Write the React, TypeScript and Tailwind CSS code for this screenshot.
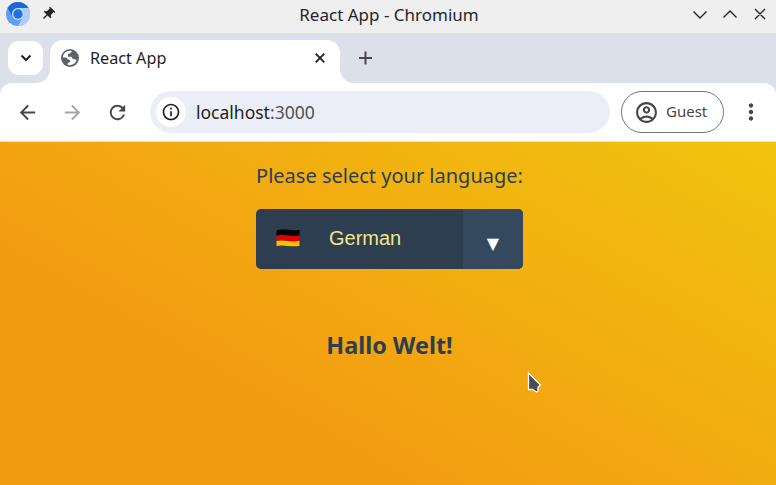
import React from "react";
import { MdArrowBack, MdArrowForward, MdRefresh, MdOutlineInfo, MdOutlineAccountCircle, MdMoreVert, MdPushPin } from "react-icons/md";

function ChromiumLogo() {
  return (
    <svg width="24" height="24" viewBox="0 0 24 24">
      <circle cx="12" cy="12" r="12" fill="#639df5" />
      <path d="M12 6h10.400A12 12 0 0 1 12 24l5.200-9z" fill="#afcefb" />
      <path d="M1.600 6A12 12 0 0 1 22.400 6H12a6 6 0 0 0-5.200 9z" fill="#1b68d6" />
      <circle cx="12" cy="12" r="6" fill="#c8defc" />
      <circle cx="12" cy="12" r="4.700" fill="#1a73e8" />
    </svg>
  );
}

function Globe() {
  return (
    <svg width="18" height="18" viewBox="0 0 18 18">
      <circle cx="9" cy="9" r="9" fill="#5f6368" />
      <path d="M1.800 8.600C2 4.800 5 1.900 8.600 1.800c1 0 1.700.1 2.300.4L9.400 4.200 7 5.100v2.600h3.400l1.600 2.500h2.300l1.300 1.100A7.200 7.200 0 0 1 6.700 15.800v-1.900l2.600-.9v-1.500L6.400 9.800 5 8.600z" fill="white" />
    </svg>
  );
}

function TitleBar() {
  return (
    <header className="grid h-[33px] grid-cols-[1fr_auto_1fr] items-center bg-[#efefef] text-[#232629]">
      <div className="flex items-center gap-[10px] pb-[5px] pl-[6px]">
        <ChromiumLogo />
        <MdPushPin size={16} className="rotate-45" />
      </div>
      <h1 className="pb-[3px] pl-[2px] text-[17px] leading-6">React App - Chromium</h1>
      <div className="flex justify-end pr-[8px] pb-[5px]">
        <svg width="75" height="14" viewBox="0 0 75 14" fill="none" stroke="currentColor" strokeWidth="1.4">
          <path d="M.5 4.500 7 11 13.500 4.500M30.500 10.500 37 4 43.500 10.500M62 2l10 10M72 2 62 12" />
        </svg>
      </div>
    </header>
  );
}

function TabStrip() {
  return (
    <div className="flex h-[50px] items-start bg-[#dce0e8] text-[#1f1f1f]">
      <div className="flex h-full w-[50px] items-start bg-white">
        <div className="flex h-full w-full rounded-br-[14px] bg-[#dce0e8] pt-2 pl-2">
          <button className="flex h-[34px] w-[35px] items-center justify-center rounded-[11px] bg-white">
            <svg width="12" height="8" viewBox="0 0 12 8" fill="none" stroke="currentColor" strokeWidth="2"><path d="m1.500 1.500 4.500 4.500 4.500-4.500" /></svg>
          </button>
        </div>
      </div>
      <div className="mt-[7px] flex h-[43px] w-[290px] items-start rounded-t-[13px] bg-white pt-[9px] pr-[15px] pl-[11px]">
        <Globe />
        <span className="-mt-px ml-[11px] text-[16.2px] leading-5">React App</span>
        <svg className="mt-[4px] ml-auto" width="10" height="10" viewBox="0 0 10 10" stroke="currentColor" strokeWidth="1.8"><path d="m.7.7 8.600 8.600m0-8.600-8.600 8.600" /></svg>
      </div>
      <div className="h-full flex-1 bg-white">
        <div className="h-full rounded-bl-[14px] bg-[#dce0e8] pt-[18px] pl-[18px]">
          <svg width="14" height="14" viewBox="0 0 14 14" stroke="#474747" strokeWidth="2"><path d="M7.500 .5v13M1 7h13" /></svg>
        </div>
      </div>
    </div>
  );
}

function Toolbar() {
  return (
    <div className="bg-[#dce0e8]">
      <div className="flex h-[59px] items-center rounded-t-[12px] border-b border-[#dfe3ea] bg-white pl-[16px] text-[#474747]">
        <MdArrowBack size={23} />
        <MdArrowForward size={23} className="ml-[22px] text-[#a5a5a5]" />
        <MdRefresh size={23} className="ml-[22px]" />
        <div className="ml-[21px] flex h-[42px] w-[460px] items-center rounded-full bg-[#ebeef7] pl-[6px]">
          <span className="flex size-[30px] items-center justify-center rounded-full bg-white text-[#1f1f1f]"><MdOutlineInfo size={20} /></span>
          <span className="ml-[10px] pb-px text-[17.5px] leading-6 text-[#1f1f1f]">localhost<span className="text-[#505050]">:3000</span></span>
        </div>
        <button className="ml-[11px] flex h-[42px] w-[103px] items-center rounded-full border border-[#747775] pl-[12px]">
          <MdOutlineAccountCircle size={25} />
          <span className="ml-[7px] pb-[2px] text-[15px]">Guest</span>
        </button>
        <MdMoreVert size={26} className="ml-[14px]" />
      </div>
    </div>
  );
}

function GermanFlag() {
  return (
    <svg width="24" height="18" viewBox="0 0 24 18">
      <path d="M.5 1.800C8-1.200 15 2.600 23.500.8V6.500C15 8.500 8 4.700.5 6.700z" fill="#000" />
      <path d="M.5 6.700C8 4.700 15 8.500 23.500 6.500v5.300C15 13.800 8 10 .5 12z" fill="#df0000" />
      <path d="M.5 12C8 10 15 13.800 23.500 11.800v4.900C15 18.700 8 15 .5 17z" fill="#fcc000" />
    </svg>
  );
}

function Page() {
  return (
    <main className="relative flex h-[343px] flex-col items-center bg-[linear-gradient(30deg,#f39c12_30%,#f1c40f)] text-[#2c3e50]">
      <p className="mt-[19px] ml-[3px] text-[20px] leading-[30px]">Please select your language:</p>
      <button className="mt-[18px] ml-[3px] flex h-[60px] w-[267px] overflow-hidden rounded-[5px] bg-[#2c3e50]">
        <span className="flex h-full w-[207px] items-center pb-[2px] pl-5">
          <GermanFlag />
          <span className="ml-[29px] font-['Liberation_Sans',Arial,sans-serif] text-[20px] text-[#f0e68c]">German</span>
        </span>
        <span className="flex h-full w-[60px] items-center justify-center bg-[#34495e] pt-[9px] font-['DejaVu_Sans',sans-serif] text-[16px] text-white">▼</span>
      </button>
      <h2 className="mt-[58px] ml-[3px] text-[23.4px] leading-[36px] font-bold">Hallo Welt!</h2>
      <svg className="absolute top-[228px] left-[525px]" width="18" height="26" viewBox="0 0 18 26">
        <path d="M3.500 3v16.500h4l4 2.500 1.500-.8v-4l2.500-2.200z" fill="#4d4d4d" stroke="white" strokeWidth="1.3" />
      </svg>
    </main>
  );
}

export default function App() {
  return (
    <div className="h-[485px] w-[776px] overflow-hidden font-['Noto_Sans',sans-serif]">
      <TitleBar />
      <TabStrip />
      <Toolbar />
      <Page />
    </div>
  );
}
